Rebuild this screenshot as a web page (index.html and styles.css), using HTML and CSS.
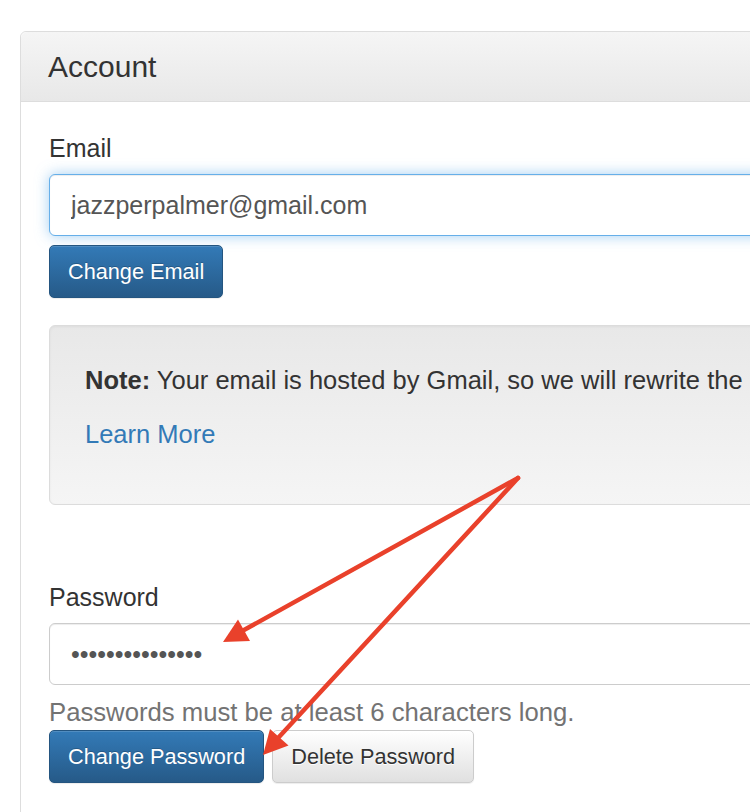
FILE: index.html
```html
<!DOCTYPE html>
<html lang="en">
<head>
    <meta charset="UTF-8">
    <meta name="viewport" content="width=device-width, initial-scale=1.0">
    <title>Account</title>
    <link rel="stylesheet" href="styles.css">
</head>
<body>

    <div class="panel">
        <div class="panel-heading">Account</div>

        <div class="panel-body">
            <form class="email-form">
                <label for="email">Email</label>
                <input type="email" id="email" class="form-control focused" value="jazzperpalmer@gmail.com">
                <div class="buttons">
                    <button type="submit" class="btn btn-primary">Change Email</button>
                </div>
            </form>

            <div class="well">
                <p><strong>Note:</strong> Your email is hosted by Gmail, so we will rewrite the</p>
                <p><a href="#">Learn More</a></p>
            </div>

            <form class="password-form">
                <label for="password">Password</label>
                <input type="password" id="password" class="form-control" value="secretpassword1">
                <p class="help">Passwords must be at least 6 characters long.</p>
                <div class="buttons">
                    <button type="submit" class="btn btn-primary">Change Password</button>
                    <button type="button" class="btn btn-default">Delete Password</button>
                </div>
            </form>
        </div>
    </div>

    <!-- flechas de anotación -->
    <svg class="annotations" width="750" height="812" viewBox="0 0 750 812">
        <g stroke="#e9412b" stroke-width="4.5" stroke-linecap="round" fill="none">
            <line x1="518" y1="478" x2="244" y2="630"/>
            <line x1="518" y1="478" x2="279" y2="737"/>
        </g>
        <g fill="#e9412b">
            <polygon points="223,642 238,619.5 250,641"/>
            <polygon points="263,755 270,729 288.5,745.5"/>
        </g>
    </svg>

</body>
</html>
```

FILE: styles.css
```css
html, body {
    overflow: hidden;
}
body {
    font-family: "Liberation Sans", Arial, sans-serif;
    color: #333;
    background: #fff;
    margin: 0;
    padding: 31px 0 0 20px;
}
.panel {
    width: 900px;
    border: 1px solid #ddd;
    border-radius: 6px;
}
.panel-heading {
    height: 69px;
    display: flex;
    align-items: center;
    padding: 0 27px;
    font-size: 30px;
    background: linear-gradient(#f5f5f5, #e8e8e8);
    border-bottom: 1px solid #ddd;
    border-radius: 6px 6px 0 0;
}
.panel-body {
    padding: 28px 28px 40px;
}
form {
    display: flex;
    flex-direction: column;
}
label {
    font-size: 25px;
    line-height: 36px;
    margin-bottom: 8px;
}
.form-control {
    box-sizing: border-box;
    height: 62px;
    padding: 0 21px;
    font-family: inherit;
    font-size: 25px;
    color: #555;
    background: #fff;
    border: 1px solid #ccc;
    border-radius: 6px;
    box-shadow: inset 0 1px 1px rgba(0, 0, 0, 0.075);
    outline: none;
}
.form-control.focused {
    border-color: #66afe9;
    box-shadow: inset 0 1px 1px rgba(0, 0, 0, 0.075), 0 0 14px rgba(102, 175, 233, 0.6);
}
.buttons {
    display: flex;
    gap: 8px;
}
.email-form .buttons {
    margin-top: 9px;
}
.btn {
    height: 53px;
    padding: 0 18px;
    font-family: inherit;
    font-size: 21.7px;
    border-radius: 5px;
    cursor: pointer;
}
.btn-primary {
    color: #fff;
    background: linear-gradient(#337ab7, #265a88);
    border: 1px solid #245580;
    text-shadow: 0 -1px 0 rgba(0, 0, 0, 0.2);
    box-shadow: inset 0 1px 0 rgba(255, 255, 255, 0.15), 0 1px 1px rgba(0, 0, 0, 0.075);
}
.btn-default {
    color: #333;
    background: linear-gradient(#fff, #e0e0e0);
    border: 1px solid #ccc;
    text-shadow: 0 1px 0 #fff;
    box-shadow: inset 0 1px 0 rgba(255, 255, 255, 0.15), 0 1px 1px rgba(0, 0, 0, 0.075);
}
.well {
    margin: 27px 0 74px;
    padding: 36px 35px 34px;
    font-size: 25.5px;
    line-height: 36px;
    white-space: nowrap;
    background: linear-gradient(#e8e8e8, #f5f5f5);
    border: 1px solid #dcdcdc;
    border-radius: 6px;
    box-shadow: inset 0 1px 3px rgba(0, 0, 0, 0.05), 0 1px 0 rgba(255, 255, 255, 0.1);
}
.well p {
    margin: 0 0 18px;
}
a {
    color: #337ab7;
    text-decoration: none;
}
.help {
    margin: 9px 0 0;
    font-size: 25.7px;
    line-height: 36px;
    color: #737373;
}
.annotations {
    position: absolute;
    top: 0;
    left: 0;
    pointer-events: none;
}
```
